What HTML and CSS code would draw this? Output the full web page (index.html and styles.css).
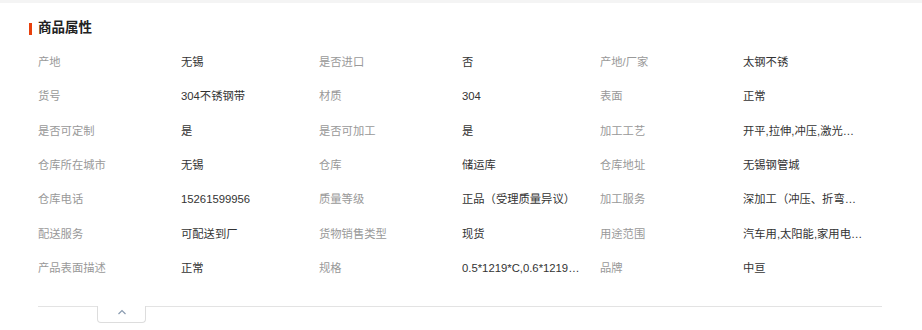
FILE: index.html
```html
<!DOCTYPE html>
<html lang="zh-CN">
<head>
<meta charset="utf-8">
<link rel="stylesheet" href="styles.css">
</head>
<body>
<div class="topband"></div>
<section class="attrs">
  <h2 class="title">商品属性</h2>
  <div class="grid">
    <span class="k">产地</span><span class="v">无锡</span>
    <span class="k">是否进口</span><span class="v">否</span>
    <span class="k">产地/厂家</span><span class="v">太钢不锈</span>

    <span class="k">货号</span><span class="v">304不锈钢带</span>
    <span class="k">材质</span><span class="v">304</span>
    <span class="k">表面</span><span class="v">正常</span>

    <span class="k">是否可定制</span><span class="v">是</span>
    <span class="k">是否可加工</span><span class="v">是</span>
    <span class="k">加工工艺</span><span class="v">开平,拉伸,冲压,激光切割,折弯</span>

    <span class="k">仓库所在城市</span><span class="v">无锡</span>
    <span class="k">仓库</span><span class="v">储运库</span>
    <span class="k">仓库地址</span><span class="v">无锡钢管城</span>

    <span class="k">仓库电话</span><span class="v">15261599956</span>
    <span class="k">质量等级</span><span class="v">正品（受理质量异议）</span>
    <span class="k">加工服务</span><span class="v">深加工（冲压、折弯、焊接）</span>

    <span class="k">配送服务</span><span class="v">可配送到厂</span>
    <span class="k">货物销售类型</span><span class="v">现货</span>
    <span class="k">用途范围</span><span class="v">汽车用,太阳能,家用电器,厨具</span>

    <span class="k">产品表面描述</span><span class="v">正常</span>
    <span class="k">规格</span><span class="v">0.5*1219*C,0.6*1219*C,0.8*1219*C</span>
    <span class="k">品牌</span><span class="v">中亘</span>
  </div>
  <div class="foot">
    <button class="toggle" type="button">
      <svg width="10" height="6" viewBox="0 0 10 6"><path d="M1.5 5 L5 1.5 L8.5 5" fill="none" stroke="#8a9bb0" stroke-width="1.2"/></svg>
    </button>
  </div>
</section>
</body>
</html>
```

FILE: styles.css
```css
* { box-sizing: border-box; }
html, body { margin: 0; padding: 0; background: #fff; }
body {
  font-family: "Liberation Sans", "Noto Sans CJK SC", sans-serif;
  font-size: 11.3px;
  color: #333;
  width: 922px;
  height: 330px;
  overflow: hidden;
}
.topband { height: 3px; background: #f4f4f4; }
.attrs { padding: 0 40px 0 38px; }
.title {
  position: relative;
  margin: 15px 0 0 0;
  font-size: 13.5px;
  font-weight: bold;
  line-height: 20px;
  color: #222;
}
.title::before {
  content: "";
  position: absolute;
  left: -9px;
  top: 5px;
  width: 3px;
  height: 12px;
  background: #e8400c;
}
.grid {
  display: grid;
  grid-template-columns: 143px 138px 143px 138px 143px 138px;
  grid-auto-rows: 34.3px;
  align-items: center;
  margin-top: 7px;
}
.k, .v {
  line-height: 16px;
  white-space: nowrap;
  overflow: hidden;
  text-overflow: ellipsis;
}
.k { color: #999; }
.v { color: #333; max-width: 120px; }
.foot {
  margin-top: 21px;
  border-top: 1px solid #e3e3e3;
  width: 844px;
  height: 20px;
  position: relative;
}
.toggle {
  position: absolute;
  left: 59px;
  top: -1px;
  width: 49px;
  height: 17px;
  background: #fff;
  border: 1px solid #ddd;
  border-top: none;
  border-radius: 0 0 4px 4px;
  padding: 0;
  display: flex;
  justify-content: center;
  align-items: flex-start;
  padding-top: 3px;
}
```
